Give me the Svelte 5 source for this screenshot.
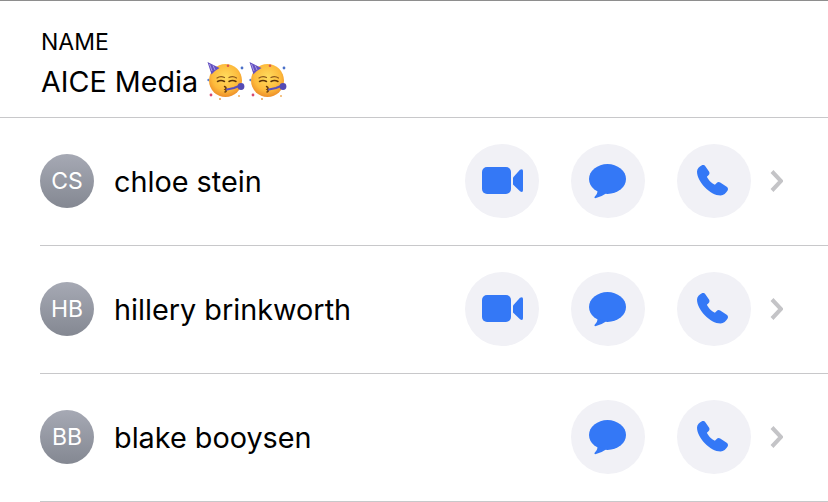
<script>
  const people = [
    { initials: 'CS', name: 'chloe stein', video: true },
    { initials: 'HB', name: 'hillery brinkworth', video: true },
    { initials: 'BB', name: 'blake booysen', video: false }
  ];
</script>

{#snippet party()}
  <svg class="emoji" viewBox="0 0 40 40" aria-hidden="true">
    <defs>
      <radialGradient id="face" cx="0.5" cy="0.4" r="0.62">
        <stop offset="0" stop-color="#ffdc5e" />
        <stop offset="0.65" stop-color="#fdba3c" />
        <stop offset="1" stop-color="#ec8a26" />
      </radialGradient>
    </defs>
    <circle cx="1.500" cy="19" r="1.200" fill="#5a80d0" />
    <circle cx="35" cy="7" r="1.400" fill="#4a70c8" />
    <circle cx="4" cy="34" r="1.400" fill="#d84a70" />
    <circle cx="13" cy="38" r="1" fill="#e8a050" />
    <circle cx="32" cy="35" r="1" fill="#f0b060" />
    <circle cx="18.500" cy="19.500" r="16.500" fill="url(#face)" />
    <path d="M0.500 1 L12.500 7 Q7 10 4.500 13.500 Z" fill="#6350c0" />
    <path d="M2.500 3 L5 10 M6 4.500 L8 9" stroke="#a99be8" stroke-width="1" fill="none" />
    <circle cx="21" cy="4.800" r="1.300" fill="#d8584c" />
    <path d="M10 17 Q13.500 14.500 17.500 16.500 M22 16.500 Q26 14.500 29.500 17" stroke="#8f5a1c" stroke-width="1.200" fill="none" stroke-linecap="round" />
    <path d="M10.500 20.500 Q14 18.500 17.500 20.500 M22 20.500 Q25.500 18.500 29 20.500" stroke="#5e3608" stroke-width="1.500" fill="none" stroke-linecap="round" />
    <path d="M17.500 25.500 Q20.500 27 18 28.500 Q20.500 30 18 31" stroke="#5e3608" stroke-width="1.400" fill="none" stroke-linecap="round" />
    <path d="M20 28.500 L27 27 L32 25" stroke="#5a50bc" stroke-width="2.200" fill="none" stroke-linecap="round" />
    <circle cx="34" cy="25.500" r="3.400" fill="#544bb4" />
  </svg>
{/snippet}

<main class="page">
  <header class="head">
    <div class="label">NAME</div>
    <div class="title"><span>AICE Media</span>{@render party()}{@render party()}</div>
  </header>

  {#each people as p}
    <div class="row">
      <div class="avatar">{p.initials}</div>
      <div class="name">{p.name}</div>
      <div class="actions">
        {#if p.video}
          <button class="act" aria-label="Video">
            <svg viewBox="0 0 74 74">
              <rect x="17" y="23" width="29" height="27" rx="5" />
              <path d="M48 33.500 L55 25.800 Q58 24 58 27 V46 Q58 49 55 47.200 L48 40.500 Z" />
            </svg>
          </button>
        {/if}
        <button class="act" aria-label="Message">
          <svg viewBox="0 0 74 74">
            <ellipse cx="36.500" cy="35" rx="18.500" ry="15" />
            <path d="M27 46 Q26.500 50 23.500 53 Q23 54.500 25 54 Q30 53 35 49.500 Z" />
          </svg>
        </button>
        <button class="act" aria-label="Call">
          <svg viewBox="0 0 74 74">
            <path d="M24.500 21.500 c1.500-.8 3-.5 4 1 l3.500 5 c.8 1.200 .6 2.500-.3 3.400 l-1.800 1.800 c1 2.500 4.500 6.500 8 8 l1.800-1.800 c1-1 2.300-1.100 3.500-.3 l6.500 4.200 c1.300 .9 1.700 2.500 .9 3.800 -1.500 2.500-4 4.900-7 4.900 -10.500 0-23.600-14-23.600-24 0-3 2.500-4.800 4.500-6z" />
          </svg>
        </button>
        <svg class="chev" viewBox="0 0 13 22" aria-hidden="true">
          <path d="M2 1.500 L11 11 L2 20.500" />
        </svg>
      </div>
    </div>
  {/each}
</main>

<style>
  :global(body) {
    margin: 0;
    background: #fff;
  }
  .page {
    width: 828px;
    height: 502px;
    overflow: hidden;
    background: #fff;
    color: #000;
    font-family: Inter, "Liberation Sans", sans-serif;
  }
  .head {
    box-sizing: border-box;
    height: 118px;
    padding: 28px 0 0 41px;
    border-top: 1px solid #8e8e8e;
    border-bottom: 1px solid #c8c8ca;
  }
  .label {
    font-size: 23px;
    line-height: 26px;
  }
  .title {
    display: flex;
    align-items: center;
    gap: 2px;
    margin-top: 7px;
    font-size: 28.7px;
    line-height: 40px;
  }
  .title span {
    width: 164px;
  }
  .emoji {
    width: 40px;
    height: 40px;
    margin-top: -2px;
  }
  .row {
    box-sizing: border-box;
    height: 128px;
    margin-left: 40px;
    padding-bottom: 1px;
    display: flex;
    align-items: center;
    border-bottom: 1px solid #c8c8ca;
  }
  .avatar {
    width: 54px;
    height: 54px;
    border-radius: 50%;
    display: flex;
    align-items: center;
    justify-content: center;
    background: linear-gradient(#a6a9b4, #848892);
    color: #fff;
    font-size: 23px;
  }
  .name {
    margin: 2px 0 0 20px;
    font-size: 28.8px;
    line-height: 36px;
  }
  .actions {
    margin-left: auto;
    margin-right: 44px;
    display: flex;
    align-items: center;
    gap: 32px;
  }
  .act {
    width: 74px;
    height: 74px;
    padding: 0;
    border: 0;
    border-radius: 50%;
    background: #f1f1f6;
  }
  .act svg {
    display: block;
    width: 74px;
    height: 74px;
    fill: #3478f6;
  }
  .chev {
    width: 13px;
    height: 22px;
    margin: 0 1px 0 -13px;
    fill: none;
    stroke: #c4c4c7;
    stroke-width: 4;
  }
</style>
